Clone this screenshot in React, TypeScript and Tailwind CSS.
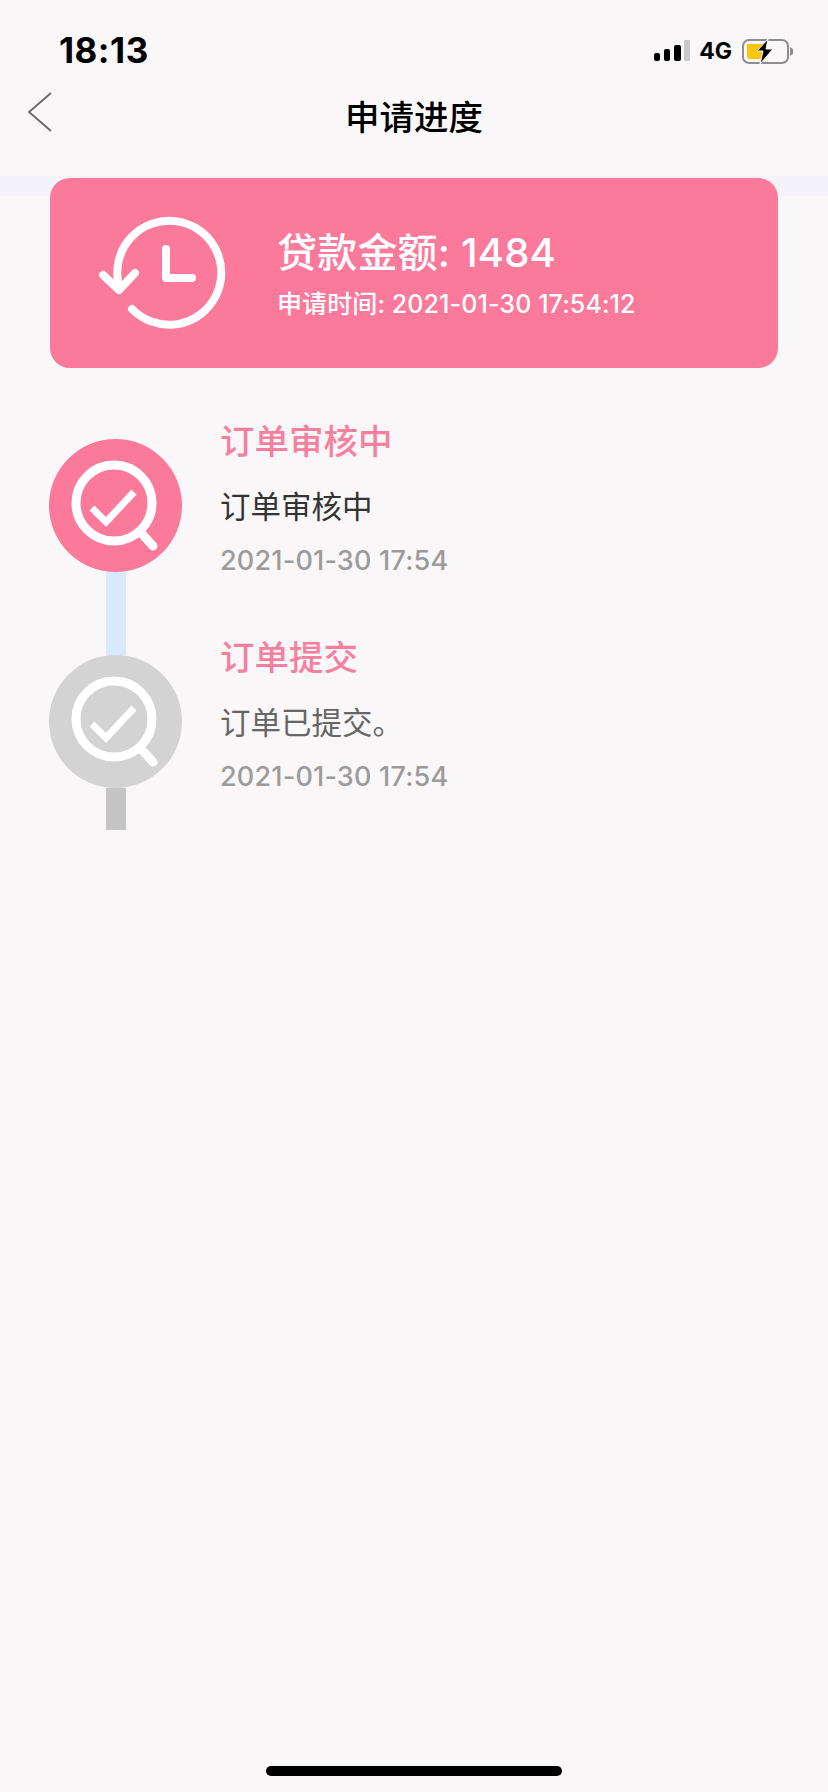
const sans = "font-['Inter','Noto_Sans_CJK_SC',sans-serif]";

function HistoryIcon() {
  return (
    <svg viewBox="0 0 130 120" className="w-[130px] h-[120px] mt-[1px]" fill="none" stroke="white" strokeWidth="8" strokeLinecap="round" strokeLinejoin="round">
      <path d="M20.5 70 A52 52 0 1 1 34 95" />
      <path d="M5 61 L21 76 L37 59" />
      <path d="M68 35 L68 64 L94 64" />
    </svg>
  );
}

function ReviewIcon() {
  return (
    <svg viewBox="0 0 133 133" className="w-[133px] h-[133px]" fill="none" stroke="white" strokeLinecap="round">
      <circle cx="65" cy="64" r="38" strokeWidth="9" />
      <path d="M94 96 L104 107" strokeWidth="9" />
      <path d="M43 69 L57 83 L85 53" strokeWidth="7" strokeLinecap="butt" />
    </svg>
  );
}

function StatusBar() {
  return (
    <div className="h-[82px] pt-[30px] pl-[59px] pr-[33px] flex items-start justify-between">
      <span className="text-[35px] leading-[40px] font-bold tracking-[0.5px] text-black font-['Inter',sans-serif]">18:13</span>
      <div className="flex items-center mt-[6px]">
        <svg viewBox="0 0 38 24" className="w-[38px] h-[24px]">
          <rect x="1" y="14" width="6" height="8" rx="2" fill="#000" />
          <rect x="11" y="10" width="6" height="12" rx="2" fill="#000" />
          <rect x="21" y="6" width="7" height="16" rx="2" fill="#000" />
          <rect x="31" y="1" width="6" height="21" rx="1" fill="#c8c8c8" />
        </svg>
        <span className="ml-[8px] text-[23px] leading-[30px] font-bold text-black font-['Inter',sans-serif]">4G</span>
        <svg viewBox="0 0 54 30" className="ml-[9px] w-[54px] h-[30px]">
          <rect x="2" y="4" width="45" height="23" rx="6" fill="none" stroke="#8e8e8e" strokeWidth="2" />
          <path d="M6 8 H25 V23 H9 a3 3 0 0 1 -3 -3 Z" fill="#fbc50d" />
          <path d="M49 11 L52 13 V18 L49 20 Z" fill="#8e8e8e" />
          <path d="M27 3 L16 15 H22 L19 28 L32 13 H25 Z" fill="#000" stroke="#f9f7f8" strokeWidth="1" />
        </svg>
      </div>
    </div>
  );
}

function Step({ title, body, time, active }: { title: string; body: string; time: string; active: boolean }) {
  return (
    <div className="flex">
      <div className="w-[133px] flex flex-col items-center shrink-0">
        <div className={`w-[133px] h-[133px] rounded-full ${active ? "bg-[#fb799b]" : "bg-[#d3d3d3]"}`}>
          <ReviewIcon />
        </div>
        <div className={`w-[20px] ${active ? "h-[83px] bg-[#d8e8fd]" : "h-[42px] bg-[#c4c4c4]"}`} />
      </div>
      <div className="ml-[38px] -mt-[19px]">
        <h3 className="text-[34.5px] leading-[44px] font-medium text-[#f77fa0]">{title}</h3>
        <p className={`mt-[23px] text-[30.5px] leading-[40px] ${active ? "text-[#333333]" : "text-[#666666]"}`}>{body}</p>
        <p className="mt-[17px] text-[27px] leading-[34px] tracking-[0.2px] font-medium text-[#9b9b9b]">{time}</p>
      </div>
    </div>
  );
}

export default function App() {
  return (
    <div className={`relative w-[828px] h-[1792px] bg-[#f9f7f8] overflow-hidden ${sans}`}>
      <StatusBar />

      <header className="h-[94px] relative flex items-center justify-center">
        <svg viewBox="0 0 26 42" className="absolute left-[27px] top-[10px] w-[26px] h-[42px]" fill="none" stroke="#666666" strokeWidth="1.8">
          <path d="M24 1 L2 20 L24 39" />
        </svg>
        <h1 className="text-[34.5px] leading-[44px] font-medium text-black -mt-[23px]">申请进度</h1>
      </header>

      <div className="h-[20px] bg-[#f3f3f9]" />

      <section className="mx-[50px] -mt-[18px] h-[190px] rounded-[20px] bg-[#fb799b] flex items-center relative text-white">
        <div className="ml-[48px] w-[130px] shrink-0">
          <HistoryIcon />
        </div>
        <div className="ml-[49px]">
          <div className="text-[40px] leading-[46px] tracking-[0.2px] font-medium mt-[4px]">贷款金额: 1484</div>
          <div className="mt-[12px] text-[25px] leading-[32px] tracking-[0.1px] font-medium">申请时间: 2021-01-30 17:54:12</div>
        </div>
      </section>

      <div className="mt-[71px] ml-[49px]">
        <Step title="订单审核中" body="订单审核中" time="2021-01-30 17:54" active />
        <Step title="订单提交" body="订单已提交。" time="2021-01-30 17:54" active={false} />
      </div>

      <div className="absolute left-[266px] bottom-[16px] w-[296px] h-[10px] rounded-full bg-black" />
    </div>
  );
}
